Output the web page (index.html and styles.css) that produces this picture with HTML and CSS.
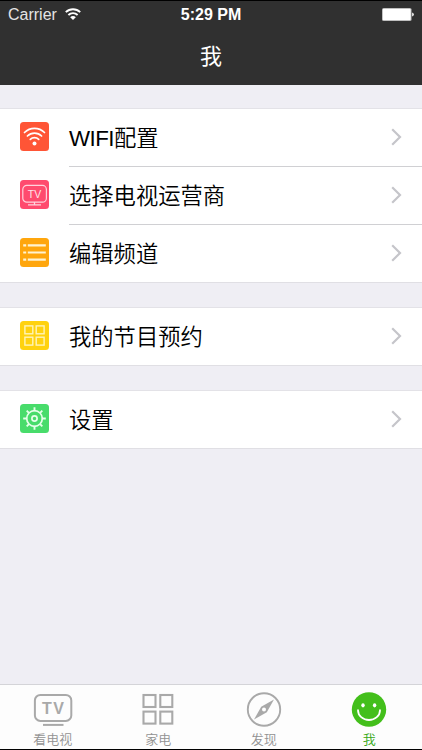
FILE: index.html
```html
<!DOCTYPE html>
<html lang="zh-CN">
<head>
  <meta charset="utf-8">
  <title>我</title>
  <link rel="stylesheet" href="styles.css">
</head>
<body>
<div class="screen">

<header class="header">
  <div class="status">
    <div class="carrier">
      <span>Carrier</span>
      <svg class="wifi" width="16" height="12" viewBox="0 0 16 12" fill="none" stroke="#fff" stroke-width="1.9">
        <path d="M0.8 4.1a10.4 10.4 0 0 1 14.4 0M3.4 7a6.6 6.6 0 0 1 9.2 0"/>
        <path d="M8 12L5.2 9.3a3.9 3.9 0 0 1 5.6 0z" fill="#fff" stroke="none"/>
      </svg>
    </div>
    <div class="time">5:29 PM</div>
    <div class="power">
      <svg width="32" height="13" viewBox="0 0 32 13" fill="#fff">
        <rect x="0" y="0" width="29.6" height="13" rx="1.6" fill="#aaa"/>
        <rect x="0.7" y="0.7" width="28" height="11.6" rx="1"/>
        <path d="M30.2 4.4q1.6 0.5 1.6 2.1t-1.6 2.1z"/>
      </svg>
    </div>
  </div>
  <h1>我</h1>
</header>

<main class="content">
  <ul class="group">
    <li class="row">
      <svg class="icon" viewBox="0 0 29 29" fill="none" stroke="#fff">
        <rect width="29" height="29" rx="3.5" fill="#ff5536" stroke="none"/>
        <g stroke-width="1.7" stroke-linecap="round">
          <path d="M4.5 10.5a14.4 14.4 0 0 1 20 0M7.4 14a10.2 10.2 0 0 1 14.2 0M10.3 17.3a6.2 6.2 0 0 1 8.4 0"/>
        </g>
        <circle cx="14.5" cy="21.5" r="2" fill="#fff" stroke="none"/>
      </svg>
      <div class="cell">
        <span class="label"><span class="latin">WIFI</span>配置</span>
        <svg class="arrow" viewBox="0 0 11 18"><path d="M1.2 1.2L9 9L1.2 16.8"/></svg>
      </div>
    </li>
    <li class="row">
      <svg class="icon" viewBox="0 0 29 29" fill="none" stroke="#ffd3dc">
        <rect width="29" height="29" rx="3.5" fill="#ff4b6e" stroke="none"/>
        <rect x="2.8" y="5.4" width="23.6" height="16.8" rx="4" stroke-width="1.2"/>
        <path d="M14.5 22v2.5M8 24.8h13" stroke-width="1.3"/>
        <text class="tv-small" x="14.5" y="17.8" text-anchor="middle">TV</text>
      </svg>
      <div class="cell">
        <span class="label">选择电视运营商</span>
        <svg class="arrow" viewBox="0 0 11 18"><path d="M1.2 1.2L9 9L1.2 16.8"/></svg>
      </div>
    </li>
    <li class="row">
      <svg class="icon" viewBox="0 0 29 29" fill="none" stroke="#fff3d2">
        <rect width="29" height="29" rx="3.5" fill="#ffa60d" stroke="none"/>
        <path d="M3.2 7.4h3M7.8 7.4h18M3.2 14.5h3M7.8 14.5h18M3.2 21.6h3M7.8 21.6h18" stroke-width="2.2"/>
      </svg>
      <div class="cell">
        <span class="label">编辑频道</span>
        <svg class="arrow" viewBox="0 0 11 18"><path d="M1.2 1.2L9 9L1.2 16.8"/></svg>
      </div>
    </li>
  </ul>

  <ul class="group">
    <li class="row">
      <svg class="icon" viewBox="0 0 29 29" fill="none" stroke="#fff4b8" stroke-width="1.4">
        <rect width="29" height="29" rx="3.5" fill="#ffd20f" stroke="none"/>
        <rect x="4.9" y="4.9" width="7.9" height="7.9"/>
        <rect x="16.2" y="4.9" width="7.9" height="7.9"/>
        <rect x="4.9" y="16.2" width="7.9" height="7.9"/>
        <rect x="16.2" y="16.2" width="7.9" height="7.9"/>
      </svg>
      <div class="cell">
        <span class="label">我的节目预约</span>
        <svg class="arrow" viewBox="0 0 11 18"><path d="M1.2 1.2L9 9L1.2 16.8"/></svg>
      </div>
    </li>
  </ul>

  <ul class="group">
    <li class="row">
      <svg class="icon" viewBox="0 0 29 29" fill="none" stroke="#e6ffea">
        <rect width="29" height="29" rx="3.5" fill="#48dc6b" stroke="none"/>
        <circle cx="14.5" cy="14.5" r="7.8" stroke-width="1.7"/>
        <circle cx="14.5" cy="14.5" r="2.6" stroke-width="1.7"/>
        <path d="M14.5 3.2v4M14.5 21.8v4M3.2 14.5h4M21.8 14.5h4M6.7 6.7l2.4 2.4M19.9 19.9l2.4 2.4M22.3 6.7l-2.4 2.4M9.1 19.9l-2.4 2.4" stroke-width="1.9"/>
      </svg>
      <div class="cell">
        <span class="label">设置</span>
        <svg class="arrow" viewBox="0 0 11 18"><path d="M1.2 1.2L9 9L1.2 16.8"/></svg>
      </div>
    </li>
  </ul>
</main>

<nav class="tabs">
  <a class="tab">
    <svg width="40" height="36" viewBox="0 0 40 36" fill="none" stroke="#a9a9a9" stroke-width="2">
      <rect x="1.9" y="3.9" width="36.4" height="26" rx="5.5"/>
      <path d="M10 33.9h20.5"/>
      <text class="tv-big" x="20.8" y="22.8" text-anchor="middle">TV</text>
    </svg>
    <span>看电视</span>
  </a>
  <a class="tab">
    <svg width="36" height="36" viewBox="0 0 36 36" fill="none" stroke="#a9a9a9" stroke-width="2.1">
      <rect x="3.5" y="4" width="12" height="12"/>
      <rect x="20.3" y="4" width="12" height="12"/>
      <rect x="3.5" y="20.6" width="12" height="12"/>
      <rect x="20.3" y="20.6" width="12" height="12"/>
    </svg>
    <span>家电</span>
  </a>
  <a class="tab">
    <svg width="36" height="36" viewBox="0 0 36 36">
      <circle cx="18" cy="18.5" r="16.2" fill="none" stroke="#a9a9a9" stroke-width="1.9"/>
      <path d="M28 8.5L20.8 21.3L8 28.5L15.2 15.7z" fill="#a9a9a9"/>
      <circle cx="18" cy="18.5" r="2" fill="#fff"/>
    </svg>
    <span>发现</span>
  </a>
  <a class="tab active">
    <svg width="36" height="36" viewBox="0 0 36 36">
      <circle cx="18" cy="18.5" r="17.2" fill="#43bf1b"/>
      <ellipse cx="12" cy="14.3" rx="1.7" ry="2.1" fill="#fff"/>
      <ellipse cx="23.6" cy="14.3" rx="1.7" ry="2.1" fill="#fff"/>
      <path d="M7 19.2a11 9.8 0 0 0 22 0" fill="none" stroke="#fff" stroke-width="1.8" stroke-linecap="round"/>
    </svg>
    <span>我</span>
  </a>
</nav>

</div>
</body>
</html>
```
FILE: styles.css
```css
body {
    margin: 0;
    font-family: "Liberation Sans", "Noto Sans CJK SC", sans-serif;
    background: #efeef4;
}

.screen {
    display: flex;
    flex-direction: column;
    box-sizing: border-box;
    height: 750px;
    border-top: 1px solid #000;
    border-bottom: 1px solid #000;
    overflow: hidden;
}

/* header */
.header {
    height: 84px;
    background: #303030;
    color: #fff;
}

.status {
    display: grid;
    grid-template-columns: 1fr auto 1fr;
    align-items: center;
    height: 28px;
    padding: 0 8px;
    font-size: 16px;
}

.carrier {
    display: flex;
    align-items: center;
    gap: 8px;
    color: #e4e4e4;
}

.wifi {
    margin-bottom: 2px;
}

.time {
    font-weight: bold;
}

.power {
    display: flex;
    justify-content: flex-end;
    padding-bottom: 1px;
}

.header h1 {
    margin: 0;
    text-align: center;
    font-size: 22px;
    font-weight: normal;
    line-height: 56px;
}

/* list */
.content {
    flex: 1;
    padding-top: 23px;
}

.group {
    margin: 0 0 24px;
    padding: 0;
    list-style: none;
    background: #fff;
    border-top: 1px solid #e3e2e7;
    border-bottom: 1px solid #e0dfe4;
}

.row {
    display: flex;
    align-items: center;
    height: 57px;
    padding-left: 20px;
}

.row + .row {
    height: 58px;
}

.icon {
    width: 29px;
    height: 29px;
    margin: 0 20px 2px 0;
}

.cell {
    flex: 1;
    display: flex;
    align-items: center;
    box-sizing: border-box;
    height: 100%;
    padding-right: 20px;
}

.row + .row .cell {
    border-top: 1px solid #d0d0d3;
}

.label {
    flex: 1;
    font-size: 22.3px;
    font-weight: 350;
    line-height: 55px;
    padding-top: 2px;
    color: #000;
}

.latin {
    letter-spacing: -0.5px;
}

.arrow {
    width: 11px;
    height: 18px;
    margin-bottom: 2px;
    fill: none;
    stroke: #c5c5ca;
    stroke-width: 2.2;
}

.tv-small {
    font-size: 10.5px;
    fill: #ffe3e9;
    stroke: none;
}

.tv-big {
    font-size: 16px;
    font-weight: bold;
    letter-spacing: 1.5px;
    fill: #a9a9a9;
    stroke: none;
}

/* bottom tabs */
.tabs {
    display: flex;
    height: 64px;
    background: #fdfdfd;
    border-top: 1px solid #d4d4d8;
}

.tab {
    flex: 1;
    display: flex;
    flex-direction: column;
    align-items: center;
    padding-top: 6px;
    color: #929292;
    font-size: 13px;
    font-weight: 350;
}

.tab svg {
    flex-shrink: 0;
}

.tab span {
    line-height: 22px;
    padding-top: 2px;
}

.tab.active {
    color: #34a814;
}
```
